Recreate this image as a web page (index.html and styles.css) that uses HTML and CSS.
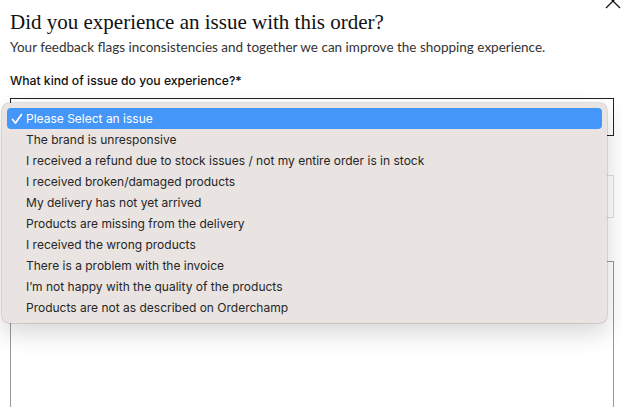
FILE: index.html
```html
<!DOCTYPE html>
<html>
<head>
<meta charset="utf-8">
<link rel="stylesheet" href="styles.css">
</head>
<body>
<div class="modal">
  <button class="close" aria-label="Close">
    <svg width="16" height="16" viewBox="0 0 16 16"><path d="M1 1 L15 15 M15 1 L1 15" stroke="#111" stroke-width="1.3" fill="none"/></svg>
  </button>
  <h1 class="title">Did you experience an issue with this order?</h1>
  <p class="subtitle">Your feedback flags inconsistencies and together we can improve the shopping experience.</p>
  <div class="field">
    <label class="label">What kind of issue do you experience?*</label>
    <div class="select"></div>
  </div>
  <div class="field second">
    <div class="input"></div>
  </div>
  <div class="field third">
    <div class="textarea"></div>
  </div>

  <ul class="menu">
    <li class="item selected"><svg class="check" width="12" height="12" viewBox="0 0 12 12"><path d="M1.5 6.5 L4.5 10 L10.5 1.5" stroke="#fff" stroke-width="1.7" fill="none" stroke-linecap="round" stroke-linejoin="round"/></svg>Please Select an issue</li>
    <li class="item">The brand is unresponsive</li>
    <li class="item">I received a refund due to stock issues / not my entire order is in stock</li>
    <li class="item">I received broken/damaged products</li>
    <li class="item">My delivery has not yet arrived</li>
    <li class="item">Products are missing from the delivery</li>
    <li class="item">I received the wrong products</li>
    <li class="item">There is a problem with the invoice</li>
    <li class="item">I’m not happy with the quality of the products</li>
    <li class="item">Products are not as described on Orderchamp</li>
  </ul>
</div>
</body>
</html>
```
FILE: styles.css
```css
* { box-sizing: border-box; }
html, body { margin: 0; padding: 0; background: #fff; overflow: hidden; }
body { width: 622px; height: 407px; }
.modal {
  position: relative;
  padding: 10px 8px 0 10px;
  height: 407px;
  display: flex;
  flex-direction: column;
}
.close {
  position: absolute;
  top: -7px;
  right: 1px;
  border: 0;
  background: none;
  padding: 0;
  width: 16px;
  height: 16px;
}
.close svg { display: block; }
.title {
  font-family: "Liberation Serif", "Times New Roman", serif;
  font-weight: normal;
  font-size: 21px;
  line-height: 24px;
  color: #111;
  margin: 0;
}
.subtitle {
  font-family: Lato, "Open Sans", sans-serif;
  font-size: 13.5px;
  line-height: 18px;
  color: #333;
  margin: 4px 0 0;
}
.field { display: flex; flex-direction: column; }
.label {
  font-family: Inter, Lato, sans-serif;
  font-weight: 500;
  font-size: 12.2px;
  line-height: 16px;
  color: #111;
  margin-top: 17px;
}
.select {
  margin-top: 9px;
  height: 38px;
  border: 1px solid #222;
}
.second .input {
  margin-top: 39px;
  height: 43px;
  border: 1px solid #ddd;
}
.third .textarea {
  margin-top: 43px;
  height: 160px;
  border: 1px solid #999;
}
.menu {
  position: absolute;
  left: 2px;
  top: 103px;
  width: 605px;
  margin: 0;
  padding: 5px 5px;
  list-style: none;
  background: #e9e3e1;
  border-radius: 7px;
  box-shadow: 0 0 0 0.5px rgba(0,0,0,0.22), 0 10px 24px rgba(0,0,0,0.16);
  font-family: Inter, "Noto Sans", sans-serif;
  font-size: 12px;
  color: #262626;
}
.item {
  height: 21px;
  line-height: 21px;
  padding-left: 19px;
  position: relative;
  white-space: nowrap;
}
.item.selected {
  background: #4496f8;
  color: #fff;
  border-radius: 4px;
}
.check {
  position: absolute;
  left: 4px;
  top: 5px;
}
```
